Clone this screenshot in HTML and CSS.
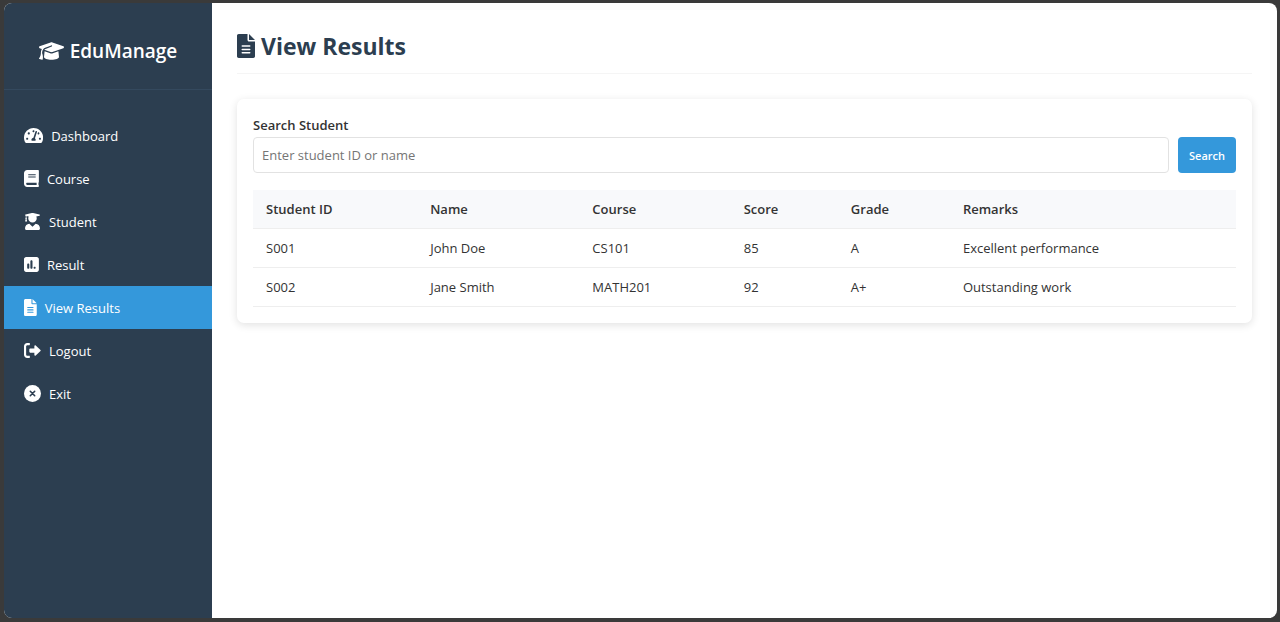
FILE: index.html
```html
<!DOCTYPE html>
<html lang="en">
<head>
<meta charset="utf-8">
<meta name="viewport" content="width=device-width, initial-scale=1">
<title>EduManage - View Results</title>
<link rel="stylesheet" href="styles.css">
</head>
<body>
<div class="window">
  <aside class="sidebar">
    <div class="brand">
      <svg class="brand-icon" viewBox="0 0 640 512" aria-hidden="true"><path d="M320 32c-8.1 0-16.1 1.4-23.7 4.1L15.8 137.4C6.3 140.9 0 149.9 0 160s6.3 19.1 15.8 22.6l57.9 20.9C57.3 229.3 48 259.8 48 291.9v28.1c0 28.4-10.8 57.7-22.3 80.8c-6.5 13-13.9 25.8-22.5 37.6C0 442.7-.9 448.3 .9 453.4s6 8.9 11.2 10.2l64 16c4.2 1.1 8.7 .3 12.4-2s6.3-6.1 7.1-10.4c8.6-42.8 4.3-81.2-2.1-108.7C90.3 344.3 86 329.8 80 316.5V291.900c0-30.200 10.200-58.700 27.900-81.500c12.900-15.500 29.600-28 49.200-35.700l157-61.700c8.200-3.200 17.500 .8 20.700 9s-.8 17.500-9 20.700l-157 61.700c-12.400 4.900-23.300 12.400-32.200 21.600l159.600 57.600c7.600 2.700 15.600 4.100 23.700 4.100s16.100-1.400 23.700-4.100L624.200 182.600c9.500-3.400 15.800-12.500 15.800-22.600s-6.300-19.100-15.800-22.600L343.700 36.100C336.100 33.400 328.100 32 320 32zM128 408c0 35.300 86 72 192 72s192-36.700 192-72L496.700 262.600 354.500 314c-11.100 4-22.800 6-34.500 6s-23.500-2-34.500-6L143.300 262.600 128 408z"/></svg>
      <span>EduManage</span>
    </div>
    <nav class="menu">
      <a class="menu-item" href="#dashboard">
        <svg class="menu-icon" viewBox="0 0 576 512" aria-hidden="true"><path d="M288 32C128.94 32 0 160.94 0 320c0 52.8 14.25 102.26 39.06 144.8 5.61 9.62 16.3 15.2 27.44 15.2h443c11.14 0 21.83-5.58 27.44-15.2C561.75 422.26 576 372.8 576 320c0-159.06-128.94-288-288-288zm0 64c14.71 0 26.58 10.13 30.32 23.65-1.11 2.26-2.64 4.23-3.45 6.67l-9.22 27.67c-5.13 3.49-10.97 6.01-17.64 6.01-17.67 0-32-14.33-32-32S270.33 96 288 96zM96 384c-17.67 0-32-14.33-32-32s14.33-32 32-32 32 14.33 32 32-14.33 32-32 32zm48-160c-17.67 0-32-14.33-32-32s14.33-32 32-32 32 14.33 32 32-14.33 32-32 32zm246.77-72.41l-61.33 184C343.13 347.33 352 364.54 352 384c0 11.72-3.38 22.55-8.88 32H232.88c-5.5-9.45-8.88-20.28-8.88-32 0-33.94 26.5-61.43 59.9-63.59l61.34-184.01c4.17-12.56 17.73-19.45 30.36-15.17 12.57 4.19 19.35 17.79 15.17 30.36zm14.66 57.2l15.52-46.55c3.47-1.29 7.13-2.23 11.05-2.23 17.67 0 32 14.33 32 32s-14.33 32-32 32c-11.38-.01-20.89-6.28-26.57-15.22zM480 384c-17.67 0-32-14.33-32-32s14.33-32 32-32 32 14.33 32 32-14.33 32-32 32z"/></svg>
        <span>Dashboard</span>
      </a>
      <a class="menu-item" href="#course">
        <svg class="menu-icon" viewBox="0 0 448 512" aria-hidden="true"><path d="M448 360V24c0-13.3-10.7-24-24-24H96C43 0 0 43 0 96v320c0 53 43 96 96 96h328c13.3 0 24-10.7 24-24v-16c0-7.5-3.5-14.3-8.9-18.7-4.2-15.4-4.2-59.3 0-74.7 5.4-4.3 8.9-11.1 8.9-18.6zM128 134c0-3.3 2.7-6 6-6h212c3.3 0 6 2.7 6 6v20c0 3.3-2.7 6-6 6H134c-3.3 0-6-2.7-6-6v-20zm0 64c0-3.3 2.7-6 6-6h212c3.3 0 6 2.7 6 6v20c0 3.3-2.7 6-6 6H134c-3.3 0-6-2.7-6-6v-20zm253.4 250H96c-17.7 0-32-14.3-32-32 0-17.6 14.4-32 32-32h285.4c-1.9 17.1-1.9 46.9 0 64z"/></svg>
        <span>Course</span>
      </a>
      <a class="menu-item" href="#student">
        <svg class="menu-icon" viewBox="-32 0 512 512" aria-hidden="true"><path d="M319.4 320.6L224 416l-95.4-95.4C57.1 323.7 0 382.2 0 454.4v9.6c0 26.500 21.500 48 48 48h352c26.500 0 48-21.500 48-48v-9.600c0-72.200-57.100-130.700-128.600-133.800zM13.600 79.800l6.400 1.500v58.400c-7 4.200-12 11.500-12 20.300 0 8.400 4.600 15.400 11.100 19.700L3.500 242c-1.700 6.900 2.100 14 7.600 14h41.800c5.500 0 9.300-7.100 7.600-14l-15.600-62.300C51.400 175.400 56 168.400 56 160c0-8.800-5-16.100-12-20.300V87.100l66 15.900c-8.600 17.200-14 36.400-14 57 0 70.700 57.300 128 128 128s128-57.300 128-128c0-20.600-5.300-39.800-14-57l96.300-23.200c18.200-4.400 18.200-27.100 0-31.500l-190.400-46c-13-3.100-26.700-3.100-39.700 0L13.600 48.200c-18.100 4.400-18.100 27.200 0 31.600z"/></svg>
        <span>Student</span>
      </a>
      <a class="menu-item" href="#result">
        <svg class="menu-icon" viewBox="0 0 448 512" aria-hidden="true"><path fill-rule="evenodd" d="M64 32h320c35 0 64 29 64 64v320c0 35-29 64-64 64H64c-35 0-64-29-64-64V96c0-35 29-64 64-64zM128 224c-18 0-32 14-32 32v96c0 18 14 32 32 32s32-14 32-32v-96c0-18-14-32-32-32zM224 128c-18 0-32 14-32 32v192c0 18 14 32 32 32s32-14 32-32V160c0-18-14-32-32-32zM320 320c-18 0-32 14-32 32s14 32 32 32 32-14 32-32-14-32-32-32z"/></svg>
        <span>Result</span>
      </a>
      <a class="menu-item active" href="#view-results" aria-current="page">
        <svg class="menu-icon" viewBox="0 0 384 512" aria-hidden="true"><path fill-rule="evenodd" d="M48 0C21 0 0 21 0 48v416c0 27 21 48 48 48h288c27 0 48-21 48-48V160H256c-18 0-32-14-32-32V0zM256 0v128h128zM112 240h160c9 0 16 7 16 16s-7 16-16 16H112c-9 0-16-7-16-16s7-16 16-16zm0 72h160c9 0 16 7 16 16s-7 16-16 16H112c-9 0-16-7-16-16s7-16 16-16zm0 72h160c9 0 16 7 16 16s-7 16-16 16H112c-9 0-16-7-16-16s7-16 16-16z"/></svg>
        <span>View Results</span>
      </a>
      <a class="menu-item" href="#logout">
        <svg class="menu-icon" viewBox="0 0 512 512" aria-hidden="true"><path d="M497 273L353 409c-15 15-41 4.500-41-17v-72H184c-13 0-24-11-24-24v-80c0-13 11-24 24-24h128v-72c0-21 26-32 41-17l144 136c9.300 9.400 9.300 24.600 0 34zM176 468v-40c0-6.600-5.400-12-12-12H104c-22 0-40-18-40-40V136c0-22 18-40 40-40h60c6.600 0 12-5.400 12-12V44c0-6.600-5.400-12-12-12H96c-53 0-96 43-96 96v256c0 53 43 96 96 96h68c6.600 0 12-5.400 12-12z"/></svg>
        <span>Logout</span>
      </a>
      <a class="menu-item" href="#exit">
        <svg class="menu-icon" viewBox="0 0 512 512" aria-hidden="true"><circle cx="256" cy="256" r="256"/><path class="exit-cross" d="M190 190L322 322M322 190L190 322"/></svg>
        <span>Exit</span>
      </a>
    </nav>
  </aside>
  <main class="content">
    <h1 class="page-title">
      <svg class="title-icon" viewBox="0 0 384 512" aria-hidden="true"><path fill-rule="evenodd" d="M36 0C16 0 0 16 0 36v440c0 20 16 36 36 36h312c20 0 36-16 36-36V160H256c-18 0-32-14-32-32V0zM256 0v128h128zM112 240h160c9 0 16 7 16 16s-7 16-16 16H112c-9 0-16-7-16-16s7-16 16-16zm0 72h160c9 0 16 7 16 16s-7 16-16 16H112c-9 0-16-7-16-16s7-16 16-16zm0 72h160c9 0 16 7 16 16s-7 16-16 16H112c-9 0-16-7-16-16s7-16 16-16z"/></svg>
      <span>View Results</span>
    </h1>
    <section class="card">
      <form class="search">
        <label class="search-label" for="student-query">Search Student</label>
        <div class="search-row">
          <input class="search-input" id="student-query" type="text" placeholder="Enter student ID or name">
          <button class="search-button" type="button">Search</button>
        </div>
      </form>
      <table class="results">
        <colgroup>
          <col class="col-id"><col class="col-name"><col class="col-course"><col class="col-score"><col class="col-grade"><col>
        </colgroup>
        <thead>
          <tr><th scope="col">Student ID</th><th scope="col">Name</th><th scope="col">Course</th><th scope="col">Score</th><th scope="col">Grade</th><th scope="col">Remarks</th></tr>
        </thead>
        <tbody>
          <tr><td>S001</td><td>John Doe</td><td>CS101</td><td>85</td><td>A</td><td>Excellent performance</td></tr>
          <tr><td>S002</td><td>Jane Smith</td><td>MATH201</td><td>92</td><td>A+</td><td>Outstanding work</td></tr>
        </tbody>
      </table>
    </section>
  </main>
</div>
</body>
</html>
```
FILE: styles.css
```css
* {
  box-sizing: border-box;
}

body {
  margin: 0;
  min-height: 100vh;
  display: flex;
  padding: 3px 3px 4px 4px;
  background: #3a3a3a;
  color: #333;
  font-family: "Open Sans", "Noto Sans", sans-serif;
  font-size: 13px;
  line-height: 18px;
}

.window {
  flex: 1;
  display: flex;
  background: #fff;
  border-radius: 8px;
  overflow: hidden;
}

.sidebar {
  flex: 0 0 208px;
  background: #2c3e50;
  color: #fff;
}

.brand {
  display: flex;
  align-items: center;
  justify-content: center;
  gap: 6px;
  padding: 34px 16px 24px;
  border-bottom: 1px solid #34495e;
  font-size: 19px;
  font-weight: 600;
  line-height: 28px;
}

.brand-icon {
  height: 20px;
  fill: currentColor;
}

.menu {
  display: flex;
  flex-direction: column;
  padding-top: 24px;
}

.menu-item {
  display: flex;
  align-items: center;
  gap: 8px;
  height: 43px;
  padding: 0 20px;
  color: #fff;
  text-decoration: none;
}

.menu-item.active {
  background: #3498db;
}

.menu-icon {
  height: 17px;
  fill: currentColor;
}

.exit-cross {
  stroke: #2c3e50;
  stroke-width: 48;
  stroke-linecap: round;
}

.content {
  flex: 1;
  min-width: 0;
  padding: 24px 25px;
}

.page-title {
  display: flex;
  align-items: center;
  gap: 6px;
  margin: 0 0 25px;
  padding-bottom: 8px;
  border-bottom: 1px solid #f5f5f5;
  color: #2c3e50;
  font-size: 23px;
  font-weight: 700;
  line-height: 38px;
}

.title-icon {
  height: 24px;
  fill: currentColor;
}

.card {
  padding: 17px 16px 16px;
  border-radius: 7px;
  background: #fff;
  box-shadow: 0 2px 8px rgba(0, 0, 0, 0.12);
}

.search {
  margin-bottom: 17px;
}

.search-label {
  display: block;
  margin-bottom: 3px;
  font-weight: 600;
}

.search-row {
  display: flex;
  gap: 9px;
}

.search-input {
  flex: 1;
  min-width: 0;
  height: 36px;
  padding: 0 8px;
  border: 1px solid #e2e2e2;
  border-radius: 4px;
  background: #fff;
  color: #333;
  font: inherit;
}

.search-input::placeholder {
  color: #757575;
}

.search-button {
  padding: 0 11px;
  border: 0;
  border-radius: 4px;
  background: #3498db;
  color: #fff;
  font-family: inherit;
  font-size: 11px;
  font-weight: 600;
}

.results {
  width: 100%;
  table-layout: fixed;
  border-collapse: collapse;
}

.results th,
.results td {
  padding: 10px 13px;
  border-bottom: 1px solid #eee;
  text-align: left;
}

.results th {
  background: #f8f9fb;
  font-weight: 600;
}

.col-id {
  width: 16.7%;
}

.col-name {
  width: 16.5%;
}

.col-course {
  width: 15.4%;
}

.col-score {
  width: 10.9%;
}

.col-grade {
  width: 11.4%;
}
```
